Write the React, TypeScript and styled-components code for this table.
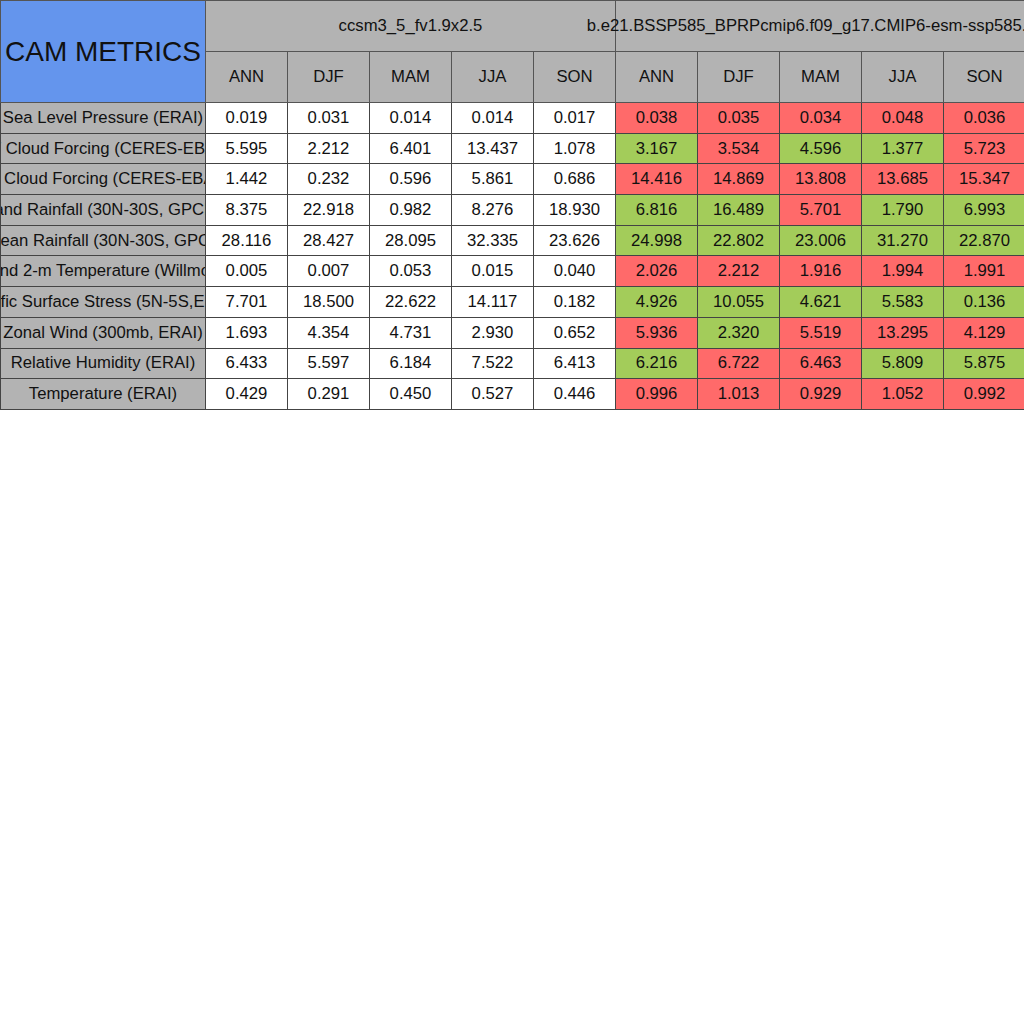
import React from "react";
import styled, { createGlobalStyle } from "styled-components";

const GlobalStyle = createGlobalStyle`
  html, body {
    margin: 0;
    padding: 0;
    background: #ffffff;
  }
  body {
    font-family: "Liberation Sans", Arial, sans-serif;
    color: #111;
    overflow: hidden;
  }
`;

const Table = styled.table`
  border-collapse: collapse;
  table-layout: fixed;
  width: 1025px;
  font-size: 16.7px;
`;

const Cell = styled.td<{ $bg?: string }>`
  border: 1px solid #444;
  height: 29.7px;
  padding: 0;
  background: ${(p) => p.$bg || "#ffffff"};
  text-align: center;
  overflow: hidden;
`;

const HeadCell = styled.th<{ $h: number; $spill?: boolean }>`
  border: 1px solid #555;
  height: ${(p) => p.$h}px;
  padding: 0;
  background: #b3b3b3;
  font-weight: normal;
  overflow: ${(p) => (p.$spill ? "visible" : "hidden")};
`;

const TitleCell = styled.th`
  border: 1px solid #555;
  padding: 0;
  background: #6495ed;
  font-weight: normal;
  font-size: 28px;
  overflow: hidden;
`;

const LabelCell = styled.td`
  border: 1px solid #444;
  height: 29.7px;
  padding: 0;
  background: #b3b3b3;
  overflow: hidden;
`;

// centred text that spills evenly over both edges when too long
const Clip = styled.div`
  display: flex;
  justify-content: center;
  white-space: nowrap;
`;

const RED = "#ff6a6a";
const GREEN = "#a3cc5a";

const seasons = ["ANN", "DJF", "MAM", "JJA", "SON"];

type Row = {
  name: string;
  base: string[];
  test: string[];
  good: boolean[];
};

const rows: Row[] = [
  { name: "Sea Level Pressure (ERAI)", base: ["0.019", "0.031", "0.014", "0.014", "0.017"], test: ["0.038", "0.035", "0.034", "0.048", "0.036"], good: [false, false, false, false, false] },
  { name: "SW Cloud Forcing (CERES-EBAF)", base: ["5.595", "2.212", "6.401", "13.437", "1.078"], test: ["3.167", "3.534", "4.596", "1.377", "5.723"], good: [true, false, true, true, false] },
  { name: "LW Cloud Forcing (CERES-EBAF)", base: ["1.442", "0.232", "0.596", "5.861", "0.686"], test: ["14.416", "14.869", "13.808", "13.685", "15.347"], good: [false, false, false, false, false] },
  { name: "Land Rainfall (30N-30S, GPCP)", base: ["8.375", "22.918", "0.982", "8.276", "18.930"], test: ["6.816", "16.489", "5.701", "1.790", "6.993"], good: [true, true, false, true, true] },
  { name: "Ocean Rainfall (30N-30S, GPCP)", base: ["28.116", "28.427", "28.095", "32.335", "23.626"], test: ["24.998", "22.802", "23.006", "31.270", "22.870"], good: [true, true, true, true, true] },
  { name: "Land 2-m Temperature (Willmott)", base: ["0.005", "0.007", "0.053", "0.015", "0.040"], test: ["2.026", "2.212", "1.916", "1.994", "1.991"], good: [false, false, false, false, false] },
  { name: "Pacific Surface Stress (5N-5S,ERAI)", base: ["7.701", "18.500", "22.622", "14.117", "0.182"], test: ["4.926", "10.055", "4.621", "5.583", "0.136"], good: [true, true, true, true, true] },
  { name: "Zonal Wind (300mb, ERAI)", base: ["1.693", "4.354", "4.731", "2.930", "0.652"], test: ["5.936", "2.320", "5.519", "13.295", "4.129"], good: [false, true, false, false, false] },
  { name: "Relative Humidity (ERAI)", base: ["6.433", "5.597", "6.184", "7.522", "6.413"], test: ["6.216", "6.722", "6.463", "5.809", "5.875"], good: [true, false, false, true, true] },
  { name: "Temperature (ERAI)", base: ["0.429", "0.291", "0.450", "0.527", "0.446"], test: ["0.996", "1.013", "0.929", "1.052", "0.992"], good: [false, false, false, false, false] },
];

export default function App() {
  return (
    <>
      <GlobalStyle />
      <Table>
        <colgroup>
          <col style={{ width: 205 }} />
          {Array.from({ length: 10 }).map((_, i) => (
            <col key={i} style={{ width: 82 }} />
          ))}
        </colgroup>
        <thead>
          <tr>
            <TitleCell rowSpan={2}>
              <Clip>CAM METRICS</Clip>
            </TitleCell>
            <HeadCell $h={50} colSpan={5}>
              <Clip>ccsm3_5_fv1.9x2.5</Clip>
            </HeadCell>
            <HeadCell $h={50} colSpan={5} $spill>
              <Clip>b.e21.BSSP585_BPRPcmip6.f09_g17.CMIP6-esm-ssp585.001</Clip>
            </HeadCell>
          </tr>
          <tr>
            {[...seasons, ...seasons].map((s, i) => (
              <HeadCell key={i} $h={50}>
                {s}
              </HeadCell>
            ))}
          </tr>
        </thead>
        <tbody>
          {rows.map((r) => (
            <tr key={r.name}>
              <LabelCell>
                <Clip>{r.name}</Clip>
              </LabelCell>
              {r.base.map((v, i) => (
                <Cell key={"b" + i}>{v}</Cell>
              ))}
              {r.test.map((v, i) => (
                <Cell key={"t" + i} $bg={r.good[i] ? GREEN : RED}>
                  {v}
                </Cell>
              ))}
            </tr>
          ))}
        </tbody>
      </Table>
    </>
  );
}
